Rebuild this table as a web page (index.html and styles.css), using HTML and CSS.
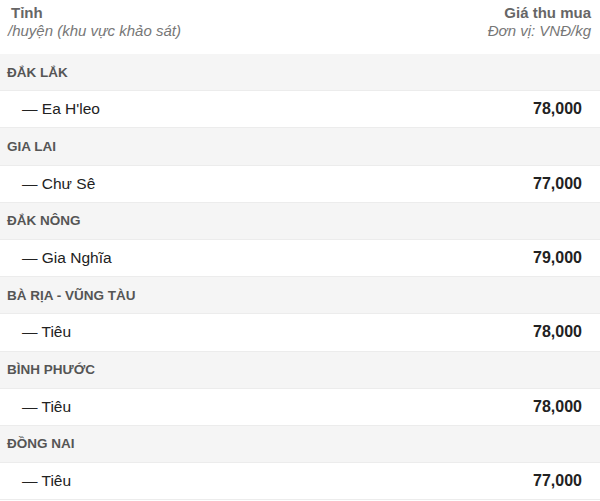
FILE: index.html
```html
<!DOCTYPE html>
<html lang="vi">
<head>
<meta charset="utf-8">
<link rel="stylesheet" href="styles.css">
</head>
<body>
<div class="table">
  <div class="head">
    <div class="head-left">
      <div class="h-title">Tỉnh</div>
      <div class="h-sub h-sub-left">/huyện (khu vực khảo sát)</div>
    </div>
    <div class="head-right">
      <div class="h-title">Giá thu mua</div>
      <div class="h-sub">Đơn vị: VNĐ/kg</div>
    </div>
  </div>
  <div class="row prov">ĐẮK LẮK</div>
  <div class="row item"><span>— Ea H'leo</span><span class="price">78,000</span></div>
  <div class="row prov">GIA LAI</div>
  <div class="row item"><span>— Chư Sê</span><span class="price">77,000</span></div>
  <div class="row prov">ĐẮK NÔNG</div>
  <div class="row item"><span>— Gia Nghĩa</span><span class="price">79,000</span></div>
  <div class="row prov">BÀ RỊA - VŨNG TÀU</div>
  <div class="row item"><span>— Tiêu</span><span class="price">78,000</span></div>
  <div class="row prov">BÌNH PHƯỚC</div>
  <div class="row item"><span>— Tiêu</span><span class="price">78,000</span></div>
  <div class="row prov">ĐỒNG NAI</div>
  <div class="row item"><span>— Tiêu</span><span class="price">77,000</span></div>
</div>
</body>
</html>
```
FILE: styles.css
```css
html, body {
  margin: 0;
  padding: 0;
  background: #fff;
  font-family: "Liberation Sans", Arial, sans-serif;
}
.table {
  width: 600px;
}
.head {
  height: 54px;
  box-sizing: border-box;
  padding: 4px 9px 0 11px;
  display: flex;
  justify-content: space-between;
  color: #666;
}
.head-right {
  text-align: right;
}
.h-title {
  font-size: 15px;
  font-weight: bold;
  line-height: 18px;
  color: #666;
}
.h-sub {
  font-size: 15px;
  font-style: italic;
  line-height: 18px;
  color: #777;
}
.h-sub-left {
  margin-left: -3px;
}
.row {
  height: 36.2px;
  border-bottom: 1px solid #ececec;
  display: flex;
  align-items: center;
}
.prov {
  background: #f5f5f5;
  padding-left: 7px;
  font-size: 13.5px;
  font-weight: bold;
  color: #555;
}
.item {
  padding: 0 18px 0 22px;
  justify-content: space-between;
  font-size: 15.5px;
  color: #222;
}
.price {
  font-size: 16px;
  font-weight: bold;
  color: #222;
}
```
